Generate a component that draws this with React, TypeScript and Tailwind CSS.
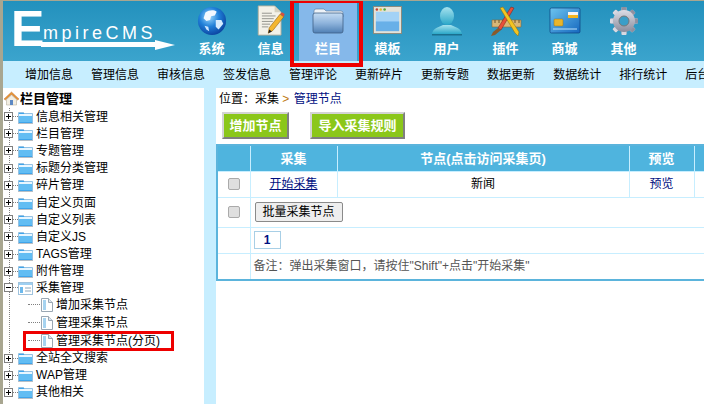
const font = "font-['Liberation_Sans','Noto_Sans_CJK_SC',sans-serif]";

function Globe() {
  return (
    <svg width="30" height="30" viewBox="0 0 32 32">
      <defs>
        <radialGradient id="gl" cx="0.4" cy="0.35" r="0.7">
          <stop offset="0" stopColor="#9fdcff" />
          <stop offset="0.5" stopColor="#1f7fd8" />
          <stop offset="1" stopColor="#0a3f9c" />
        </radialGradient>
      </defs>
      <circle cx="16" cy="16" r="15" fill="url(#gl)" />
      <path d="M9 7c4-3 9-3 12-1l-2 4-4 1-1 4-4 1-3-3z" fill="#f2f8ff" />
      <path d="M20 15l6 0 2 4-5 6-3-3z" fill="#d6ecff" />
      <path d="M8 21l4 1 1 5-3-2z" fill="#cde6ff" />
    </svg>
  );
}

function Doc() {
  return (
    <svg width="28" height="31" viewBox="0 0 30 34">
      <path d="M1 1h18l7 7v25H1z" fill="#f3f1e8" stroke="#b5b09c" />
      <path d="M19 1v7h7z" fill="#d4d0bf" />
      <path d="M5 9h11M5 12h15M5 15h13M5 18h12M5 21h9M5 24h7" stroke="#8d8d86" />
      <path d="M12 31l1-6L25 10l4 3-12 15z" fill="#f4b62f" stroke="#8a5a12" strokeWidth="0.6" />
      <path d="M25 10l2-2 3 2-1 3z" fill="#d9503c" />
      <path d="M12 31l1-4 3 2z" fill="#222" />
    </svg>
  );
}

function Folder() {
  return (
    <svg width="32" height="26" viewBox="0 0 32 26">
      <defs>
        <linearGradient id="fo" x1="0" y1="0" x2="0" y2="1">
          <stop offset="0" stopColor="#c5dcf3" />
          <stop offset="0.5" stopColor="#8fb4dc" />
          <stop offset="1" stopColor="#4f7fb4" />
        </linearGradient>
      </defs>
      <path d="M2 3q0-2 2-2h8l2 2h15q2 0 2 2v4H2z" fill="#eef3f8" stroke="#5d7795" strokeWidth="0.6" />
      <rect x="1" y="5" width="30" height="20" rx="2" fill="url(#fo)" stroke="#3f5f85" strokeWidth="0.8" />
    </svg>
  );
}

function Win() {
  return (
    <svg width="29" height="29" viewBox="0 0 30 30">
      <rect x="0.5" y="0.5" width="29" height="28" fill="#e4e2d8" stroke="#8c8a7c" />
      <circle cx="4" cy="3.5" r="1.3" fill="#c8402f" />
      <circle cx="8" cy="3.5" r="1.3" fill="#e3b92a" />
      <circle cx="12" cy="3.5" r="1.3" fill="#4fa83a" />
      <rect x="3" y="6" width="24" height="20" fill="#a3d2f6" />
      <rect x="3" y="16" width="24" height="10" fill="#68b0e8" />
    </svg>
  );
}

function User() {
  return (
    <svg width="32" height="30" viewBox="0 0 32 30">
      <defs>
        <linearGradient id="us" x1="0" y1="0" x2="0" y2="1">
          <stop offset="0" stopColor="#a5e2ee" />
          <stop offset="1" stopColor="#2aa7c8" />
        </linearGradient>
      </defs>
      <ellipse cx="16" cy="10" rx="7" ry="9" fill="url(#us)" />
      <path d="M1 28c1-6 7-7 11-9h8c4 2 10 3 11 9z" fill="url(#us)" />
      <path d="M1 28h30v1.5H1z" fill="#1a6f8f" />
    </svg>
  );
}

function Tools() {
  return (
    <svg width="32" height="32" viewBox="0 0 32 32">
      <path d="M2 15h29v7H2z" fill="#d8b777" stroke="#86693a" strokeWidth="0.6" />
      <path d="M5 15v3M9 15v3M13 15v3M21 15v3M25 15v3M29 15v3" stroke="#6d5328" />
      <path d="M21 2l3 1-13 22-3-2z" fill="#e8503a" stroke="#7a2318" strokeWidth="0.5" />
      <path d="M8 23l3 2-6 5-4 1 2-4z" fill="#8a5a2a" />
      <path d="M10 3l3-1 16 25-1 4-3-3z" fill="#f3c421" stroke="#8a6a10" strokeWidth="0.5" />
    </svg>
  );
}

function Card() {
  return (
    <svg width="32" height="28" viewBox="0 0 32 28">
      <defs>
        <linearGradient id="ca" x1="0" y1="0" x2="1" y2="1">
          <stop offset="0" stopColor="#6cc4ef" />
          <stop offset="1" stopColor="#1668bf" />
        </linearGradient>
      </defs>
      <rect x="1" y="1" width="30" height="25" rx="1.5" fill="url(#ca)" stroke="#0c3f80" strokeWidth="0.7" />
      <rect x="19" y="5" width="10" height="3" fill="#f4f4f4" />
      <rect x="19" y="8" width="10" height="3" fill="#f3b51f" />
      <rect x="5" y="12" width="9" height="7" rx="1" fill="#e9b52c" stroke="#9a7515" strokeWidth="0.5" />
      <path d="M4 22h24" stroke="#bfe3fa" />
    </svg>
  );
}

function Gear() {
  return (
    <svg width="30" height="30" viewBox="0 0 30 30">
      <defs>
        <linearGradient id="ge" x1="0" y1="0" x2="0" y2="1">
          <stop offset="0" stopColor="#dcdde6" />
          <stop offset="1" stopColor="#8a8c9c" />
        </linearGradient>
      </defs>
      <g fill="url(#ge)">
        {[0, 45, 90, 135, 180, 225, 270, 315].map((a) => (
          <rect key={a} x="12.5" y="1" width="5" height="28" rx="1" transform={`rotate(${a} 15 15)`} />
        ))}
        <circle cx="15" cy="15" r="11" />
      </g>
      <circle cx="15" cy="15" r="5" fill="#3a9ec8" stroke="#777" />
    </svg>
  );
}

const navItems = [
  { label: "系统", icon: <Globe /> },
  { label: "信息", icon: <Doc /> },
  { label: "栏目", icon: <Folder />, active: true },
  { label: "模板", icon: <Win /> },
  { label: "用户", icon: <User /> },
  { label: "插件", icon: <Tools /> },
  { label: "商城", icon: <Card /> },
  { label: "其他", icon: <Gear /> },
];

const subItems = ["增加信息", "管理信息", "审核信息", "签发信息", "管理评论", "更新碎片", "更新专题", "数据更新", "数据统计", "排行统计", "后台首页"];

function PlusBox({ open }: { open?: boolean }) {
  return (
    <span className="relative z-10 flex h-[9px] w-[9px] shrink-0 items-center justify-center border border-[#808080] bg-white">
      <span className="absolute h-px w-[5px] bg-black" />
      {!open && <span className="absolute h-[5px] w-px bg-black" />}
    </span>
  );
}

function FolderSmall() {
  return (
    <svg width="15" height="14" viewBox="0 0 15 14" className="shrink-0">
      <path d="M0.5 2.5h5l1 1h8v10h-14z" fill="#3fa4ea" stroke="#8fb8d8" strokeWidth="0.6" />
      <rect x="1" y="4" width="13" height="2" fill="#e8f6ff" />
      <rect x="1" y="6" width="13" height="6" fill="#62bdf3" />
      <rect x="0" y="13" width="15" height="1" fill="#b8bfc6" />
    </svg>
  );
}

function OpenFolder() {
  return (
    <svg width="15" height="14" viewBox="0 0 15 14" className="shrink-0">
      <rect x="0.5" y="1.5" width="14" height="12" fill="#fff" stroke="#9fc3de" />
      <rect x="1" y="2" width="13" height="2" fill="#9ed0f2" />
      <rect x="2" y="6" width="3" height="6" fill="#6db9ec" />
      <path d="M7 7h6M7 10h6" stroke="#8aa6bb" />
    </svg>
  );
}

function PageIcon() {
  return (
    <svg width="12" height="14" viewBox="0 0 12 14" className="shrink-0">
      <path d="M0.5 0.5h7l4 4v9h-11z" fill="#fff" stroke="#9aa7b3" />
      <rect x="2" y="2" width="3" height="10" fill="#a6d3f0" />
      <path d="M7.5 0.5v4h4" fill="#dde6ee" stroke="#9aa7b3" />
    </svg>
  );
}

function HomeIcon() {
  return (
    <svg width="15" height="15" viewBox="0 0 15 15">
      <path d="M7.5 1L0 8l1.5 1L7.5 3.5 13.5 9 15 8z" fill="#e8963a" stroke="#b05e1a" strokeWidth="0.4" />
      <path d="M2.5 8.5l5-4.5 5 4.5V14h-10z" fill="#f2eee2" stroke="#a8a08c" strokeWidth="0.5" />
      <rect x="6" y="9" width="3" height="5" fill="#5c88c4" />
    </svg>
  );
}

const treeTop = ["信息相关管理", "栏目管理", "专题管理", "标题分类管理", "碎片管理", "自定义页面", "自定义列表", "自定义JS", "TAGS管理", "附件管理"];
const treeBottom = ["全站全文搜索", "WAP管理", "其他相关"];
const children = ["增加采集节点", "管理采集节点", "管理采集节点(分页)"];

function TreeRow({ label }: { label: string }) {
  return (
    <div className="flex h-[17.2px] items-center">
      <PlusBox />
      <span className="w-[5px] border-t border-dotted border-[#808080]" />
      <FolderSmall />
      <span className="ml-[3px] whitespace-nowrap">{label}</span>
    </div>
  );
}

function Sidebar() {
  return (
    <div className="w-[201px] shrink-0 bg-white pl-[1px] text-[12px] leading-none text-black">
      <div className="flex h-[20px] items-center gap-[1px] text-[13px] font-bold">
        <HomeIcon />
        <span>栏目管理</span>
      </div>
      <div className="relative">
        <div className="absolute bottom-[8px] left-[5px] top-0 border-l border-dotted border-[#808080]" />
        {treeTop.map((t) => (
          <TreeRow key={t} label={t} />
        ))}
        <div className="flex h-[16.2px] items-center">
          <PlusBox open />
          <span className="w-[5px] border-t border-dotted border-[#808080]" />
          <OpenFolder />
          <span className="ml-[3px]">采集管理</span>
        </div>
        {children.map((c, i) => (
          <div key={i} className="flex h-[17.8px] items-center pl-[24px]">
            <span className="mr-[1px] w-[12px] border-t border-dotted border-[#808080]" />
            <PageIcon />
            <span className="ml-[3px] whitespace-nowrap">{c}</span>
            {i === 2 && (
              <span className="absolute left-[19px] h-[20px] w-[151px] border-[3px] border-[#ee0000]" />
            )}
          </div>
        ))}
        {treeBottom.map((t) => (
          <TreeRow key={t} label={t} />
        ))}
      </div>
    </div>
  );
}

function GreenBtn({ label, w }: { label: string; w: string }) {
  return (
    <button className={`h-[27px] ${w} border-[2px] border-b-[#808080] border-l-[#d4d4d4] border-r-[#808080] border-t-[#d4d4d4] bg-[#8bc71a] text-[13px] font-bold text-white`}>
      {label}
    </button>
  );
}

function Check() {
  return <span className="mx-auto block h-[12px] w-[12px] rounded-[2px] border border-[#aaaaaa] bg-[#dfdfdf]" />;
}

const cellB = "border border-[#c7eeff]";

function MainPane() {
  return (
    <div className="min-w-0 flex-1 overflow-hidden bg-white text-[12px] text-black">
      <div className="flex h-[22px] items-center pl-[3px] leading-none">
        <span>位置：采集&nbsp;</span>
        <span className="text-[#c07a10]">&gt;</span>
        <span className="ml-[1px] text-[#000f7f]">&nbsp;管理节点</span>
      </div>
      <div className="flex h-[34px] items-start gap-[21px] pl-[6px] pt-[2px]">
        <GreenBtn label="增加节点" w="w-[67px]" />
        <GreenBtn label="导入采集规则" w="w-[95px]" />
      </div>
      <table className="w-[500px] table-fixed border-collapse border-y-2 border-l-2 border-[#5bb4dc]">
        <colgroup>
          <col className="w-[33px]" />
          <col className="w-[87px]" />
          <col className="w-[292px]" />
          <col className="w-[65px]" />
          <col />
        </colgroup>
        <tbody>
          <tr className="h-[26px] bg-[#4fb4de] text-center text-[13px] font-bold text-white">
            <td className={cellB}></td>
            <td className={cellB}>采集</td>
            <td className={cellB}>节点(点击访问采集页)</td>
            <td className={cellB}>预览</td>
            <td className={cellB}></td>
          </tr>
          <tr className="h-[26px] text-center">
            <td className={cellB}><Check /></td>
            <td className={cellB}><span className="text-[#000f7f] underline">开始采集</span></td>
            <td className={cellB}>新闻</td>
            <td className={`${cellB} text-[#000f7f]`}>预览</td>
            <td className={cellB}></td>
          </tr>
          <tr className="h-[30px]">
            <td className={`${cellB} text-center`}><Check /></td>
            <td colSpan={4} className={`${cellB} pl-[4px]`}>
              <button className="block h-[20px] w-[88px] rounded-[2px] border border-[#8a8a8a] bg-[#eeeeee] text-[12px] text-black">
                批量采集节点
              </button>
            </td>
          </tr>
          <tr className="h-[26px]">
            <td className={cellB}></td>
            <td colSpan={4} className={`${cellB} pl-[3px]`}>
              <span className="mb-[1px] block h-[18px] w-[27px] border border-[#a8cfe6] text-center font-bold leading-[17px] text-[#000f7f]">
                1
              </span>
            </td>
          </tr>
          <tr className="h-[27px]">
            <td className={cellB}></td>
            <td colSpan={4} className={`${cellB} pl-[3px] text-[#555555]`}>
              备注：弹出采集窗口，请按住"Shift"+点击"开始采集"
            </td>
          </tr>
        </tbody>
      </table>
    </div>
  );
}

export default function App() {
  return (
    <div className={`${font} flex h-[404px] w-[704px] flex-col overflow-hidden border-l-[3px] border-t border-[#a8a690] bg-[#c7eeff]`}>
      <div className="relative flex h-[60px] shrink-0 bg-gradient-to-b from-[#2291bd] to-[#3ba4cd]">
        <div className="relative w-[179px] shrink-0 text-white">
          <span className="absolute left-[8px] top-[0px] text-[50px] font-bold leading-[56px]">E</span>
          <span className="absolute left-[40px] top-[22px] text-[18px] leading-[20px] tracking-[3.5px]">mpireCMS</span>
          <span className="absolute left-[38px] top-[41px] h-[5px] w-[116px] bg-white" />
          <span className="absolute left-[152px] top-[39px] h-0 w-0 border-y-[5px] border-l-[20px] border-y-transparent border-l-white" />
        </div>
        {navItems.map((n) => (
          <div
            key={n.label}
            className={`flex shrink-0 flex-col items-center text-[13px] font-bold text-white ${n.active ? "-ml-px w-[58px] bg-[#85b8ea] mr-px" : "w-[59px]"}`}
          >
            <div className="flex h-[39px] items-center">{n.icon}</div>
            <span className="leading-[18px]">{n.label}</span>
          </div>
        ))}
        <span className="absolute left-[287px] top-[-1px] h-[67px] w-[73px] border-x-[4px] border-b-[4px] border-t-[3px] border-[#ee0000]" />
      </div>
      <div className="flex h-[27px] shrink-0 items-center gap-[18px] overflow-hidden whitespace-nowrap pl-[22px] text-[12px] text-black">
        {subItems.map((s) => (
          <span key={s}>{s}</span>
        ))}
      </div>
      <div className="flex min-h-0 flex-1 gap-[12px]">
        <Sidebar />
        <MainPane />
      </div>
    </div>
  );
}
